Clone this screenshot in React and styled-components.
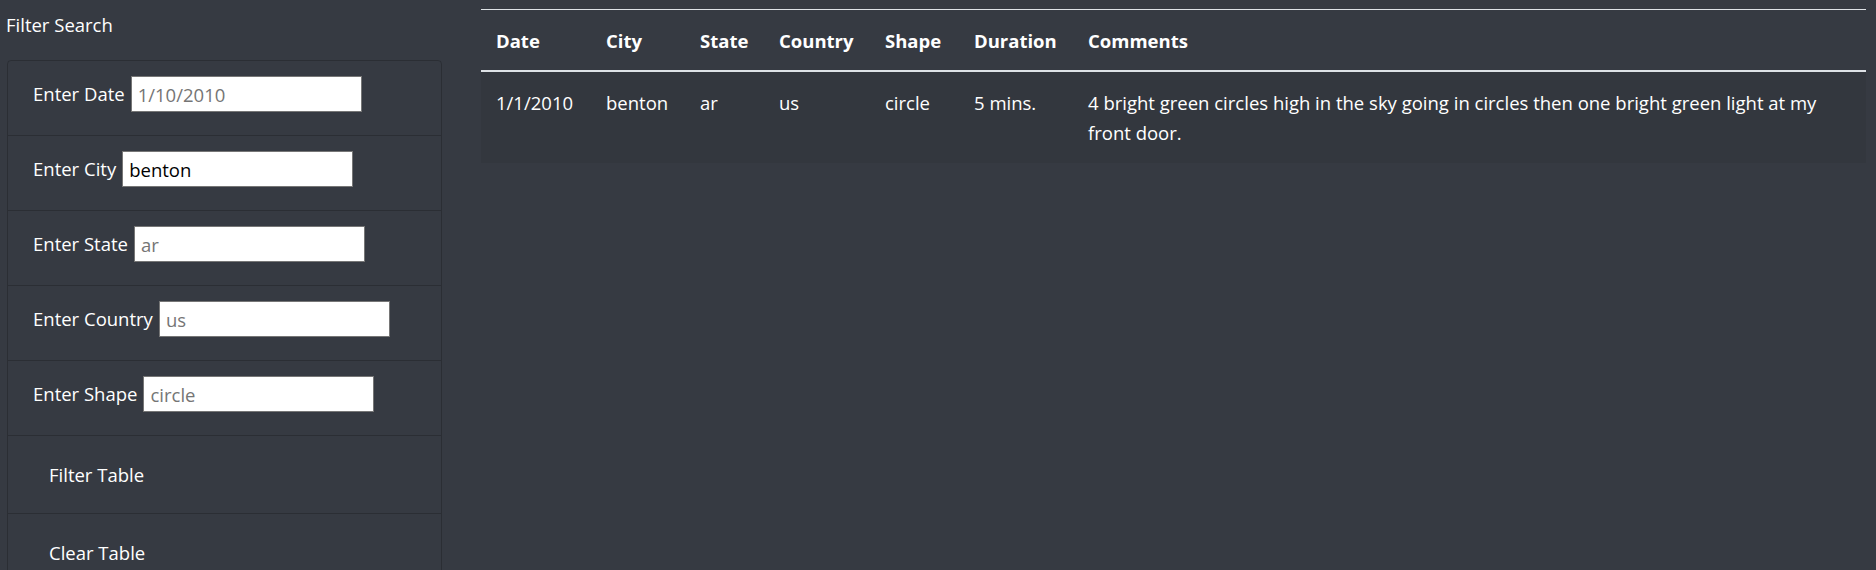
import styled, { createGlobalStyle } from "styled-components";

const GlobalStyle = createGlobalStyle`
  html, body {
    margin: 0;
    padding: 0;
    background: #363a42;
    color: #ffffff;
    font-family: "Open Sans", "Noto Sans", sans-serif;
    font-size: 18.5px;
  }
  * {
    box-sizing: border-box;
  }
`;

const filters = [
  { label: "Enter Date", placeholder: "1/10/2010" },
  { label: "Enter City", value: "benton" },
  { label: "Enter State", placeholder: "ar" },
  { label: "Enter Country", placeholder: "us" },
  { label: "Enter Shape", placeholder: "circle" },
];

const columns = [
  { title: "Date", width: 110 },
  { title: "City", width: 94 },
  { title: "State", width: 79 },
  { title: "Country", width: 106 },
  { title: "Shape", width: 89 },
  { title: "Duration", width: 114 },
  { title: "Comments" },
];

const sightings = [
  {
    datetime: "1/1/2010",
    city: "benton",
    state: "ar",
    country: "us",
    shape: "circle",
    durationMinutes: "5 mins.",
    comments:
      "4 bright green circles high in the sky going in circles then one bright green light at my front door.",
  },
];

function App() {
  return (
    <>
      <GlobalStyle />
      <Page>
        <Sidebar>
          <Title>Filter Search</Title>
          <FilterList>
            {filters.map((f) => (
              <FilterItem key={f.label}>
                <Label>
                  {f.label}{" "}
                  <Input
                    type="text"
                    placeholder={f.placeholder}
                    defaultValue={f.value}
                  />
                </Label>
              </FilterItem>
            ))}
            <ButtonItem>
              <ActionButton>Filter Table</ActionButton>
            </ButtonItem>
            <ButtonItem>
              <ActionButton>Clear Table</ActionButton>
            </ButtonItem>
          </FilterList>
        </Sidebar>

        <Main>
          <Table>
            <thead>
              <tr>
                {columns.map((c) => (
                  <Th key={c.title} $width={c.width}>
                    {c.title}
                  </Th>
                ))}
              </tr>
            </thead>
            <tbody>
              {sightings.map((s, i) => (
                <Row key={i} $striped={i % 2 === 0}>
                  <Td>{s.datetime}</Td>
                  <Td>{s.city}</Td>
                  <Td>{s.state}</Td>
                  <Td>{s.country}</Td>
                  <Td>{s.shape}</Td>
                  <Td>{s.durationMinutes}</Td>
                  <Td>{s.comments}</Td>
                </Row>
              ))}
            </tbody>
          </Table>
        </Main>
      </Page>
    </>
  );
}

const Page = styled.div`
  display: flex;
  align-items: flex-start;
  min-height: 570px;
`;

const Sidebar = styled.aside`
  width: 442px;
  flex-shrink: 0;
  padding-left: 7px;
`;

const Title = styled.div`
  height: 60px;
  padding-top: 11px;
  line-height: 28px;
  margin-left: -1px;
`;

const FilterList = styled.ul`
  list-style: none;
  margin: 0;
  padding: 0;
  border: 1px solid rgba(0, 0, 0, 0.2);
  border-radius: 4px;
  overflow: hidden;
`;

const FilterItem = styled.li`
  height: 75px;
  padding: 15px 20px 0 25px;
  border-bottom: 1px solid rgba(0, 0, 0, 0.2);
`;

const Label = styled.label`
  display: flex;
  align-items: center;
  gap: 6px;
  line-height: 30px;
  white-space: nowrap;
`;

const Input = styled.input`
  width: 231px;
  height: 36px;
  border: 1px solid #767676;
  border-radius: 0;
  padding: 0 6px;
  font-family: inherit;
  font-size: 18.5px;
  color: #000;
  background: #fff;

  &::placeholder {
    color: #757575;
  }
`;

const ButtonItem = styled.li`
  height: 78px;
  display: flex;
  align-items: center;
  padding-left: 25px;
  border-bottom: 1px solid rgba(0, 0, 0, 0.2);
`;

const ActionButton = styled.button`
  background: transparent;
  border: none;
  color: #fff;
  font-family: inherit;
  font-size: 18.5px;
  padding: 0 16px;
  cursor: pointer;
`;

const Main = styled.main`
  flex: 1;
  padding: 9px 10px 0 39px;
`;

const Table = styled.table`
  width: 100%;
  border-collapse: collapse;
  table-layout: fixed;
  border-top: 1px solid #dee2e6;
`;

const Th = styled.th`
  width: ${(p) => (p.$width ? `${p.$width}px` : "auto")};
  text-align: left;
  font-weight: 700;
  padding: 16px 15px 14px;
  line-height: 30px;
  border-bottom: 2px solid #dee2e6;
`;

const Row = styled.tr`
  background: ${(p) => (p.$striped ? "rgba(0, 0, 0, 0.05)" : "transparent")};
`;

const Td = styled.td`
  padding: 16px 15px 15px;
  line-height: 30px;
  vertical-align: top;
`;

export default App;
